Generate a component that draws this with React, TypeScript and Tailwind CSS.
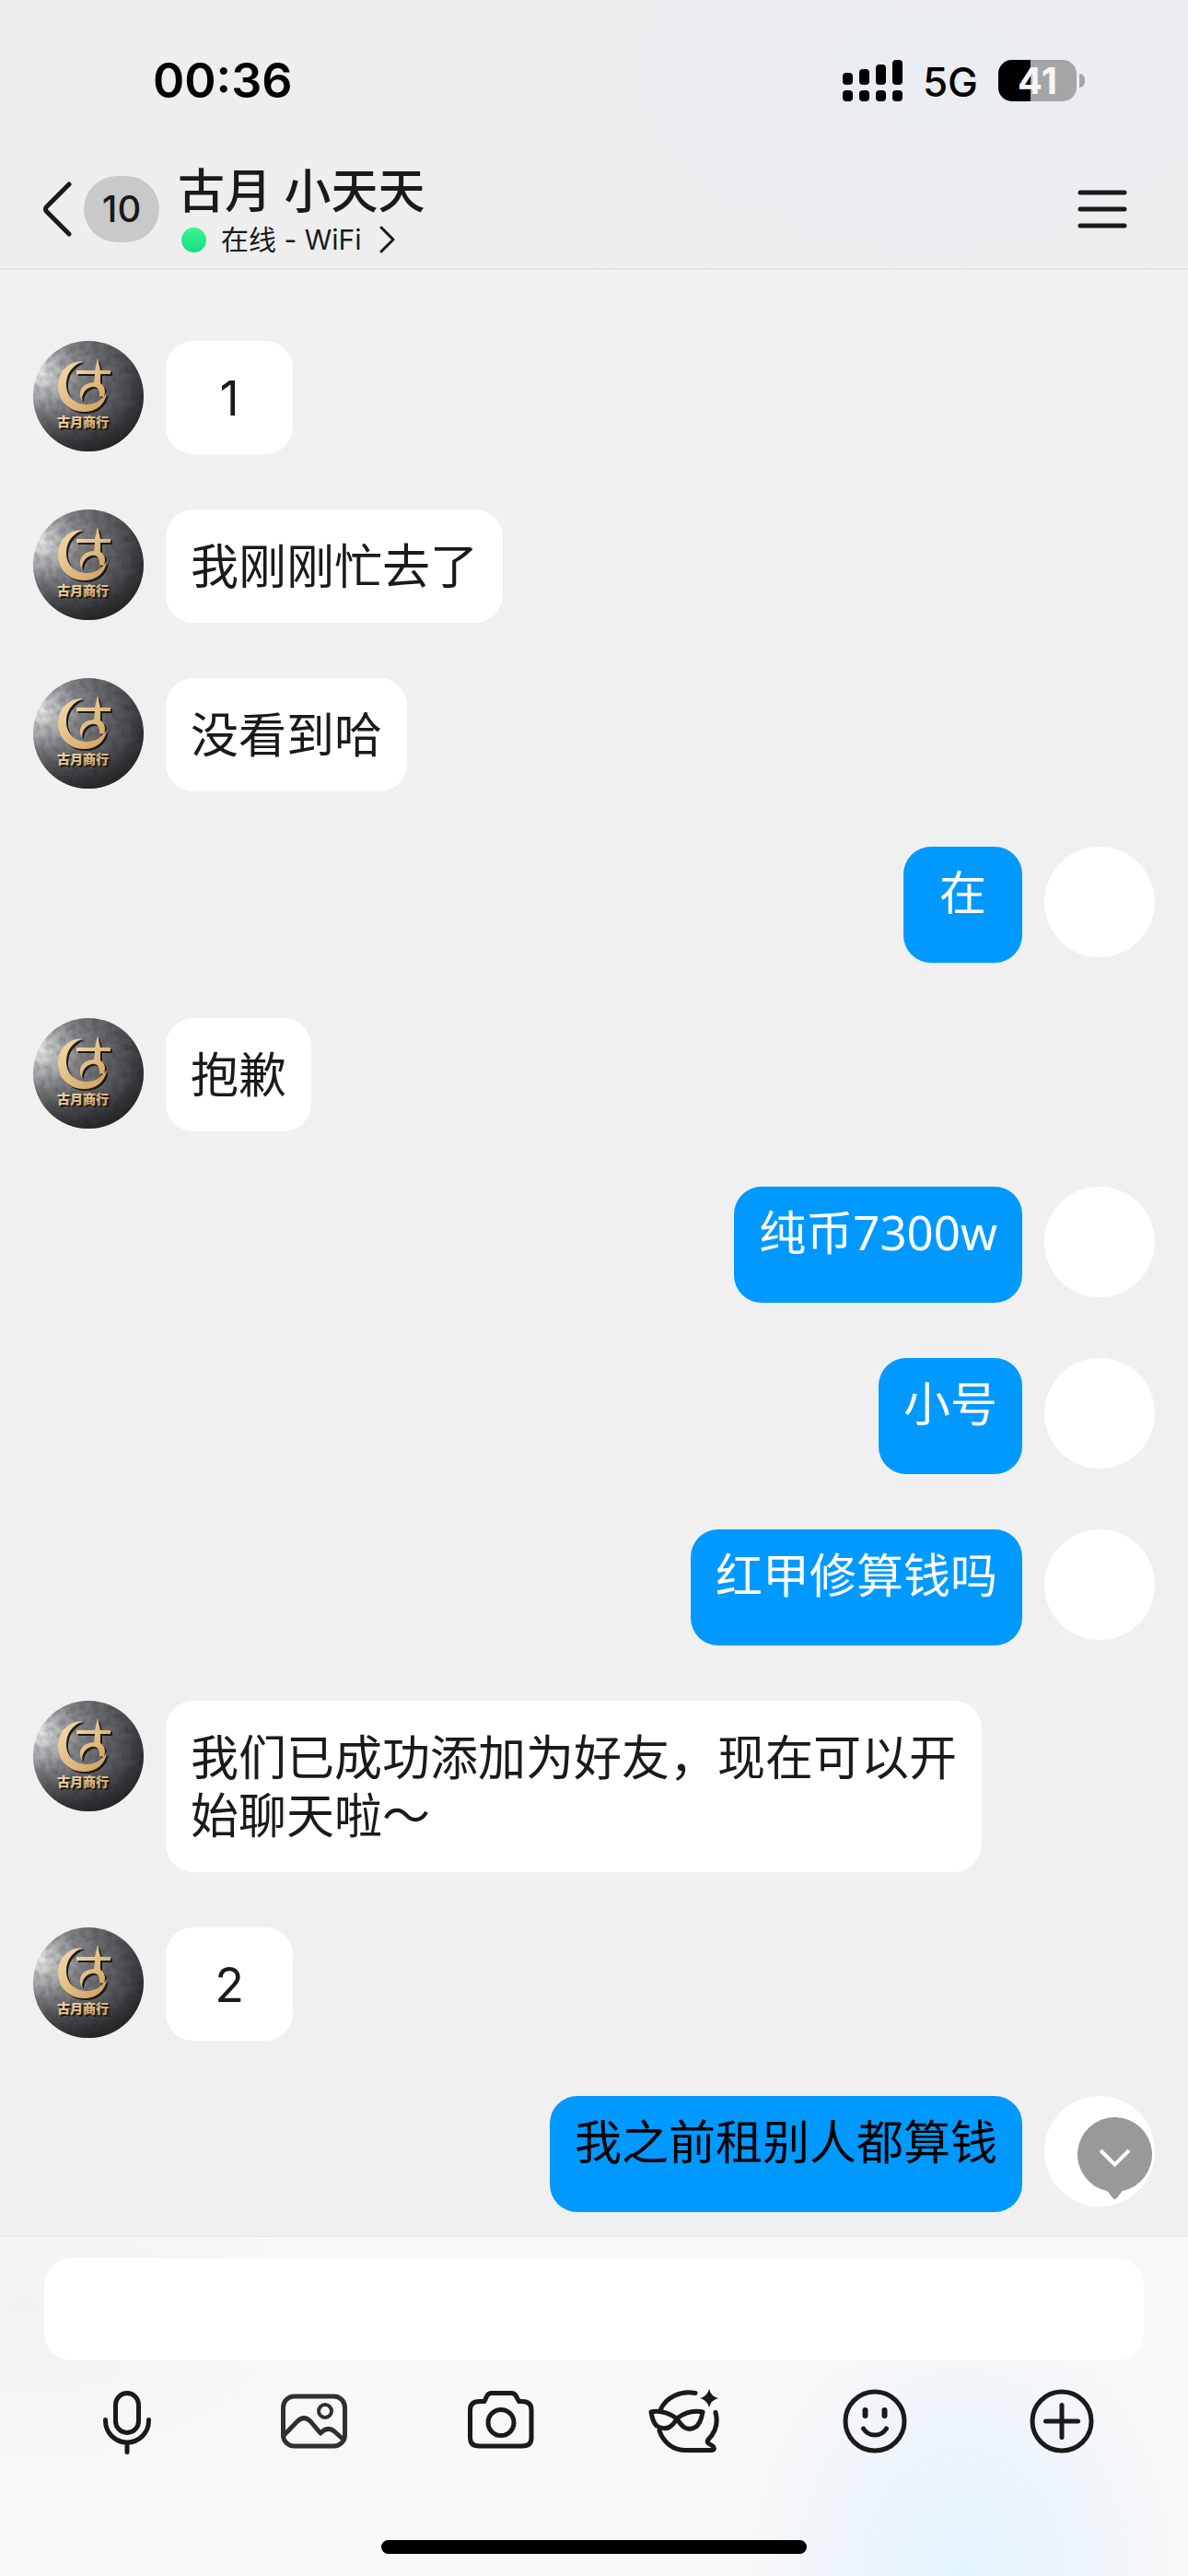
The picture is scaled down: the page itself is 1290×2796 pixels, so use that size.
import { useId, type ReactNode } from "react"
import { clsx } from "clsx"

interface Message {
  id: number
  from: "friend" | "me"
  text: string
  dark?: boolean
}

const messages: Message[] = [
  { id: 1, from: "friend", text: "1" },
  { id: 2, from: "friend", text: "我刚刚忙去了" },
  { id: 3, from: "friend", text: "没看到哈" },
  { id: 4, from: "me", text: "在" },
  { id: 5, from: "friend", text: "抱歉" },
  { id: 6, from: "me", text: "纯币7300w" },
  { id: 7, from: "me", text: "小号" },
  { id: 8, from: "me", text: "红甲修算钱吗" },
  { id: 9, from: "friend", text: "我们已成功添加为好友，现在可以开始聊天啦～" },
  { id: 10, from: "friend", text: "2" },
  { id: 11, from: "me", text: "我之前租别人都算钱", dark: true },
]

function SignalIcon() {
  return (
    <svg width="65" height="45" viewBox="0 0 65 45" aria-hidden="true">
      <rect x="0" y="14" width="11" height="13" rx="4" />
      <rect x="18" y="10" width="11" height="17" rx="4" />
      <rect x="36" y="5" width="11" height="22" rx="4" />
      <rect x="54" y="0" width="11" height="27" rx="4" />
      <rect x="0" y="33" width="11" height="12" rx="4" />
      <rect x="18" y="33" width="11" height="12" rx="4" />
      <rect x="36" y="33" width="11" height="12" rx="4" />
      <rect x="54" y="33" width="11" height="12" rx="4" />
    </svg>
  )
}

function Battery({ level }: { level: number }) {
  return (
    <div className="flex items-center gap-[3px]">
      <div className="relative flex h-[45px] w-[85px] items-center justify-center">
        <div className="absolute inset-0 overflow-hidden rounded-[15px] bg-[#a4a5a7]">
          <div className="h-full bg-black" style={{ width: `${level}%` }} />
        </div>
        <span className="relative text-[40px] leading-[45px] font-bold text-[#f4f5f6]">{level}</span>
      </div>
      <div className="h-[15px] w-[6px] rounded-r-full bg-[#a4a5a7]" />
    </div>
  )
}

function StatusBar() {
  return (
    <div className="flex h-[174px] items-center justify-between pr-[112px] pl-[166px] text-black">
      <span className="pt-[2px] text-[52px] leading-[60px] font-semibold">00:36</span>
      <div className="flex items-center gap-[22px]">
        <SignalIcon />
        <span className="pt-[4px] text-[44px] leading-[52px] font-medium">5G</span>
        <Battery level={41} />
      </div>
    </div>
  )
}

function NavBar() {
  return (
    <div className="flex h-[117px] items-start justify-between pr-[66px] pl-[46px]">
      <div className="flex items-start">
        <button type="button" aria-label="返回" className="flex h-[106px] items-center gap-[13px]">
          <svg width="32" height="60" viewBox="0 0 32 60" fill="none" stroke="currentColor" strokeWidth="5" strokeLinecap="round" strokeLinejoin="round">
            <path d="M29 3 4.5 27.500Q2.500 30 4.500 32.500L29 57" />
          </svg>
          <span className="flex h-[72px] w-[82px] items-center justify-center rounded-full bg-[#c9c9ca] text-[40px] leading-none font-medium">
            10
          </span>
        </button>
        <div className="ml-5 pt-1">
          <h1 className="text-[51px] leading-[60px] font-medium">古月 小天天</h1>
          <a href="#status" className="flex h-[44px] items-center pl-1 text-[30px] leading-[44px]">
            <span className="mr-4 size-[27px] rounded-full bg-linear-to-b from-[#3bf68f] to-[#12dc85]" />
            在线 - WiFi
            <svg className="ml-5" width="18" height="30" viewBox="0 0 18 30" fill="none" stroke="currentColor" strokeWidth="3" strokeLinecap="round" strokeLinejoin="round">
              <path d="m2 2 13 13L2 28" />
            </svg>
          </a>
        </div>
      </div>
      <button type="button" aria-label="菜单" className="flex h-[106px] items-center">
        <svg width="54" height="42" viewBox="0 0 54 42" stroke="currentColor" strokeWidth="5" strokeLinecap="round">
          <path d="M3 3h48M3 21h48M3 39h48" />
        </svg>
      </button>
    </div>
  )
}

function FriendAvatar() {
  const id = useId()
  return (
    <svg className="size-[120px] shrink-0 rounded-full" viewBox="0 0 120 120" role="img" aria-label="古月商行">
      <defs>
        <radialGradient id={`${id}stone`} gradientUnits="userSpaceOnUse" cx="9" cy="36" r="116">
          <stop offset="0" stopColor="#ececed" />
          <stop offset="0.14" stopColor="#bcbdbf" />
          <stop offset="0.35" stopColor="#85868a" />
          <stop offset="0.7" stopColor="#5c5d61" />
          <stop offset="1" stopColor="#303033" />
        </radialGradient>
        <linearGradient id={`${id}gold`} x1="0" y1="0" x2="1" y2="1">
          <stop offset="0" stopColor="#f3dcae" />
          <stop offset="1" stopColor="#cf9f5b" />
        </linearGradient>
        <linearGradient id={`${id}shade`} x1="0" y1="0" x2="0" y2="1">
          <stop offset="0.6" stopColor="#1b1b1d" stopOpacity="0" />
          <stop offset="1" stopColor="#1b1b1d" stopOpacity="0.7" />
        </linearGradient>
        <filter id={`${id}grain`} x="0" y="0" width="100%" height="100%">
          <feTurbulence type="fractalNoise" baseFrequency="0.14" numOctaves="3" seed="4" />
          <feColorMatrix values="0 0 0 0 0  0 0 0 0 0  0 0 0 0 0  0.9 0 0 0 -0.3" />
        </filter>
      </defs>
      <rect width="120" height="120" fill={`url(#${id}stone)`} />
      <rect width="120" height="120" filter={`url(#${id}grain)`} opacity="0.4" />
      <rect width="120" height="120" fill={`url(#${id}shade)`} />
      {[
        { dx: 2, dy: 2, fill: "#1c1a18" },
        { dx: 0, dy: 0, fill: `url(#${id}gold)` },
      ].map((layer) => (
        <g key={layer.dx} transform={`translate(${layer.dx} ${layer.dy})`} fill={layer.fill}>
          <path d="M54 22C38 22 27 34 27 49C27 65 39 77 55 77C68 77 78 70 80 56C74 65 67 69 58 69C45 69 36 60 36 47C36 36 42 27 54 22Z" />
          <path d="M47 32H67L70 19L73 32H84V36H73L73 46C78 49 79 54 77 61L72 60C73 53 69 49 64 50C58 51 53 56 53 65C48 56 52 46 66 45L67 36H47Z" />
          <text x="54" y="93" textAnchor="middle" fontSize="14" fontWeight="900">
            古月商行
          </text>
        </g>
      ))}
    </svg>
  )
}

function MessageRow({ message }: { message: Message }) {
  const mine = message.from === "me"
  const short = message.text.length === 1
  return (
    <li className={clsx("flex items-start gap-6", mine && "flex-row-reverse")}>
      {mine ? <div className="size-[120px] shrink-0 rounded-full bg-white" /> : <FriendAvatar />}
      <p
        className={clsx(
          "max-w-[886px] rounded-[30px] px-[27px] leading-[63px]",
          short && "text-center",
          mine
            ? "min-w-[129px] bg-[#0099ff] pt-[18px] pb-[45px] font-['Noto_Sans','Noto_Sans_CJK_SC',sans-serif] text-[51px]"
            : "min-w-[138px] bg-white pt-[31px] pb-[29px] text-[52px]",
          mine && (message.dark ? "text-black" : "text-white"),
        )}
      >
        {message.text}
      </p>
    </li>
  )
}

function ToolButton({ label, children }: { label: string; children: ReactNode }) {
  return (
    <button type="button" aria-label={label} className="flex justify-center">
      <svg className="overflow-visible" width="84" height="84" viewBox="0 0 84 84" fill="none" stroke="currentColor" strokeWidth="5" strokeLinecap="round" strokeLinejoin="round">
        {children}
      </svg>
    </button>
  )
}

function Composer() {
  return (
    <footer className="border-t border-[#e6e6e6] bg-[#f8f8f8] bg-[radial-gradient(240px_300px_at_81%_100%,#e3f4fd_0%,#edf4fb_50%,#f8f8f800_100%),radial-gradient(300px_180px_at_2%_20%,#f2f2f1_0%,#f8f8f800_100%)] pt-[23px] pb-6">
      <div className="px-12">
        <input type="text" aria-label="消息" className="block h-[111px] w-full rounded-[30px] bg-white px-8 text-[52px] outline-none" />
      </div>
      <div className="mt-6 grid grid-cols-6 px-9">
        <ToolButton label="语音">
          <rect x="29.500" y="11.500" width="25" height="43" rx="12.500" />
          <path d="M18.500 40.500v1a23.500 23.500 0 0 0 47 0v-1M42 65v10.500" />
        </ToolButton>
        <ToolButton label="图片">
          <g stroke="#303030">
            <rect x="8.500" y="15" width="67" height="54" rx="12" />
            <circle cx="54" cy="31" r="7" strokeWidth="4" />
            <path d="M8.500 58 24 42Q31 35 38 42L49 55Q57 47 64 53L74 62" />
          </g>
        </ToolButton>
        <ToolButton label="拍照">
          <path d="M18.500 20.500H24L26.500 15Q28 11.500 32 11.500H53Q57 11.500 58.500 15L61.500 20.500H65Q75 20.500 75 30V60Q75 69 65 69H18.500Q8.500 69 8.500 60V30Q8.500 20.500 18.500 20.500Z" />
          <circle cx="42" cy="43.500" r="14" />
        </ToolButton>
        <ToolButton label="匿名">
          <path d="M50 11.500Q38 9 28 14Q17 19 12.500 29" />
          <path d="M11 52C15 65 26 73.500 40 73.500H67C71 73.500 71 71 69 69L65 66.500Q62 65 64 62C72 54 75 44 72 32.500" />
          <path d="M30 39C21 33 11 30 2 32C3 38 4.500 44 8 47Q16 52 22.500 48Q27 45 30 39C38 33 48 30 58 32C57 38 55 44 51.500 47.500Q44 53 37 48Q33 44.500 30 39Z" />
          <path d="M65 7Q67 15 75 17Q67 19 65 27Q63 19 55 17Q63 15 65 7Z" fill="currentColor" stroke="none" />
        </ToolButton>
        <ToolButton label="表情">
          <circle cx="42" cy="42" r="32" />
          <path d="M31.500 30v6M52.500 30v6" strokeWidth="6" />
          <path d="M29.500 50Q34 57 42 57Q50 57 54.500 50" />
        </ToolButton>
        <ToolButton label="更多">
          <circle cx="42" cy="42" r="32" />
          <path d="M24.500 42h35M42 24.500v35" />
        </ToolButton>
      </div>
      <div className="mx-auto mt-[87px] h-[15px] w-[462px] rounded-full bg-black" />
    </footer>
  )
}

export default function App() {
  return (
    <div className="flex min-h-screen flex-col bg-[#f0f0f0] font-[Inter,'Noto_Sans_CJK_SC',sans-serif] text-[#1a1a1a]" lang="zh-CN">
      <header className="border-b-2 border-[#e2e3e3] bg-[#eeeeee] bg-[radial-gradient(520px_320px_at_78%_25%,#e9edf1_0%,#ecedf0_50%,#eeeeee00_100%)]">
        <StatusBar />
        <NavBar />
      </header>
      <main className="relative flex-1 px-9 pt-[77px] pb-[26px]">
        <ul className="flex flex-col gap-[60px]">
          {messages.map((message) => (
            <MessageRow key={message.id} message={message} />
          ))}
        </ul>
        <button type="button" aria-label="回到底部" className="absolute right-[39px] bottom-[40px] text-[#999999]">
          <svg width="81" height="89" viewBox="0 0 81 89" aria-hidden="true">
            <path d="M40.500 0a40.500 40.500 0 0 1 8 80.200L42.500 88Q40.500 90 38.500 88L32.500 80.200A40.500 40.500 0 0 1 40.500 0Z" fill="currentColor" />
            <path d="m25 36 15.500 15.500L56 36" fill="none" stroke="#fff" strokeWidth="4" />
          </svg>
        </button>
      </main>
      <Composer />
    </div>
  )
}
